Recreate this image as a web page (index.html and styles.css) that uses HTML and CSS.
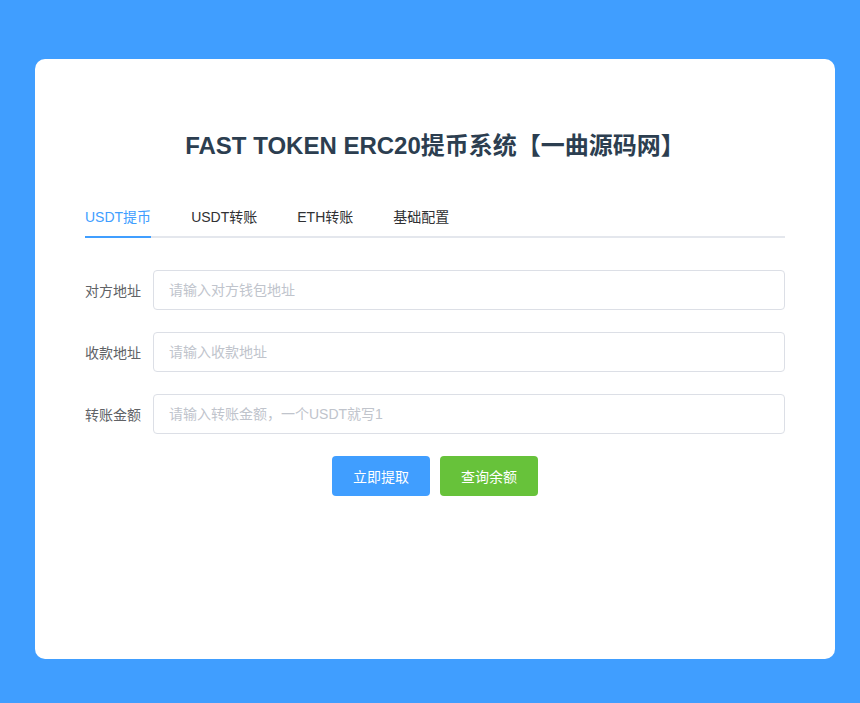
FILE: index.html
```html
<!DOCTYPE html>
<html>
<head>
    <meta charset="utf-8">
    <title>FAST TOKEN ERC20提币系统</title>
    <link rel="stylesheet" href="styles.css">
</head>
<body>
    <div class="card">
        <h1 class="title">FAST TOKEN ERC20提币系统【一曲源码网】</h1>

        <div class="tabs">
            <div class="tab active">USDT提币</div>
            <div class="tab">USDT转账</div>
            <div class="tab">ETH转账</div>
            <div class="tab">基础配置</div>
        </div>

        <form class="form">
            <div class="form-item">
                <label>对方地址</label>
                <input type="text" placeholder="请输入对方钱包地址">
            </div>
            <div class="form-item">
                <label>收款地址</label>
                <input type="text" placeholder="请输入收款地址">
            </div>
            <div class="form-item">
                <label>转账金额</label>
                <input type="text" placeholder="请输入转账金额，一个USDT就写1">
            </div>
            <div class="buttons">
                <button type="button" class="btn btn-primary">立即提取</button>
                <button type="button" class="btn btn-success">查询余额</button>
            </div>
        </form>
    </div>
</body>
</html>
```

FILE: styles.css
```css
body {
    margin: 0;
    padding: 59px 25px 44px 35px;
    background: #409eff;
    font-family: "Liberation Sans", "Noto Sans CJK SC", sans-serif;
}
.card {
    width: 700px;
    height: 500px;
    background: white;
    border-radius: 10px;
    padding: 50px;
}
.title {
    margin: 22px 0 37px;
    font-size: 24px;
    line-height: 30px;
    text-align: center;
    color: #2c3e50;
}
.tabs {
    display: flex;
    gap: 40px;
    border-bottom: 2px solid #e4e7ed;
    margin-bottom: 32px;
}
.tab {
    height: 38px;
    line-height: 38px;
    font-size: 14px;
    color: #303133;
    margin-bottom: -2px;
    border-bottom: 2px solid transparent;
}
.tab.active {
    color: #409eff;
    border-bottom-color: #409eff;
}
.form-item {
    display: flex;
    align-items: center;
    margin-bottom: 22px;
}
.form-item label {
    width: 68px;
    font-size: 14px;
    color: #606266;
}
.form-item input {
    flex: 1;
    height: 40px;
    box-sizing: border-box;
    padding: 0 15px;
    border: 1px solid #dcdfe6;
    border-radius: 4px;
    font-size: 14px;
    font-family: inherit;
    color: #606266;
    outline: none;
}
.form-item input::placeholder {
    color: #c0c4cc;
}
.buttons {
    display: flex;
    justify-content: center;
    gap: 10px;
}
.btn {
    height: 40px;
    padding: 0 20px;
    border: 1px solid transparent;
    border-radius: 4px;
    font-size: 14px;
    font-family: inherit;
    color: white;
    cursor: pointer;
}
.btn-primary {
    background: #409eff;
}
.btn-success {
    background: #67c23a;
}
```
